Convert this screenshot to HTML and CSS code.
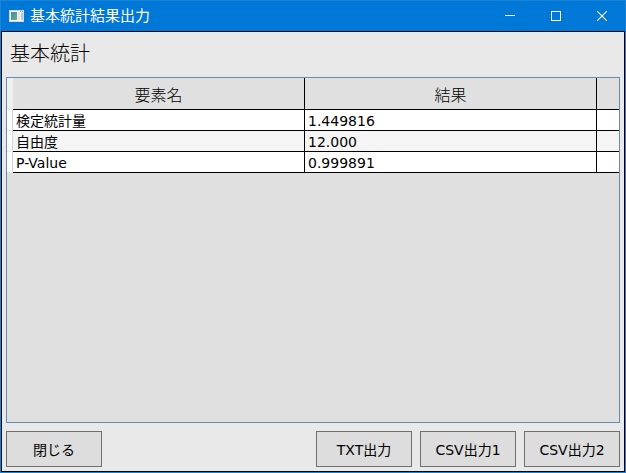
FILE: index.html
```html
<!DOCTYPE html>
<html lang="ja">
<head>
    <meta charset="UTF-8">
    <meta name="viewport" content="width=device-width, initial-scale=1.0">
    <title>基本統計結果出力</title>
    <link rel="stylesheet" href="styles.css">
</head>
<body>

    <div class="window">
        <header class="title-bar">
            <svg class="app-icon" width="15" height="12" viewBox="0 0 15 12" shape-rendering="crispEdges">
                <defs>
                    <linearGradient id="iconFill" x1="0" y1="0" x2="1" y2="1">
                        <stop offset="0" stop-color="#4b86b4"/>
                        <stop offset="1" stop-color="#5cb27c"/>
                    </linearGradient>
                </defs>
                <rect width="15" height="12" fill="#d3d8db"/>
                <rect x="1" y="1" width="13" height="10" fill="#f6f6f6"/>
                <rect x="2" y="2" width="6" height="8" fill="url(#iconFill)"/>
                <rect x="9" y="2" width="2" height="8" fill="#e4e4e4"/>
                <rect x="12" y="3" width="2" height="7" fill="#b4cfc2"/>
                <rect x="11" y="1" width="1" height="1" fill="#9aa6b0"/>
                <rect x="13" y="1" width="1" height="1" fill="#9aa6b0"/>
            </svg>
            <span class="title">基本統計結果出力</span>
            <div class="window-controls">
                <button type="button" aria-label="最小化">
                    <svg width="10" height="10" viewBox="0 0 10 10"><path d="M0 4.5H10" stroke="#fff"/></svg>
                </button>
                <button type="button" aria-label="最大化">
                    <svg width="10" height="10" viewBox="0 0 10 10"><rect x=".5" y=".5" width="9" height="9" fill="none" stroke="#fff"/></svg>
                </button>
                <button type="button" aria-label="ウィンドウを閉じる">
                    <svg width="10" height="10" viewBox="0 0 10 10"><path d="M0 0L10 10M10 0L0 10" stroke="#fff" stroke-width="1.1"/></svg>
                </button>
            </div>
        </header>

        <main class="content">
            <h1>基本統計</h1>

            <div class="grid">
                <table>
                    <colgroup>
                        <col class="col-marker">
                        <col>
                        <col>
                        <col class="col-rest">
                    </colgroup>
                    <thead>
                        <tr>
                            <td class="marker"></td>
                            <th scope="col">要素名</th>
                            <th scope="col">結果</th>
                            <td></td>
                        </tr>
                    </thead>
                    <tbody>
                        <tr>
                            <td class="marker"></td>
                            <td>検定統計量</td>
                            <td>1.449816</td>
                            <td></td>
                        </tr>
                        <tr>
                            <td class="marker"></td>
                            <td>自由度</td>
                            <td>12.000</td>
                            <td></td>
                        </tr>
                        <tr>
                            <td class="marker"></td>
                            <td>P-Value</td>
                            <td>0.999891</td>
                            <td></td>
                        </tr>
                    </tbody>
                </table>
            </div>

            <div class="actions">
                <button type="button" class="close">閉じる</button>
                <button type="button">TXT出力</button>
                <button type="button">CSV出力1</button>
                <button type="button">CSV出力2</button>
            </div>
        </main>
    </div>

</body>
</html>
```

FILE: styles.css
```css
* {
    box-sizing: border-box;
}

body {
    margin: 0;
    font-family: "DejaVu Sans", "Noto Sans CJK JP", sans-serif;
    font-size: 14px;
    color: #000;
}

.window {
    display: flex;
    flex-direction: column;
    min-height: 100vh;
    border: 1px solid #1883d7;
    background-color: #e9e9e9;
}

/* title bar */
.title-bar {
    display: flex;
    align-items: center;
    height: 30px;
    padding-left: 8px;
    background-color: #0078d7;
    color: #fff;
}

.title {
    margin-left: 6px;
    font-size: 15px;
    line-height: 20px;
}

.window-controls {
    display: flex;
    align-self: stretch;
    margin-left: auto;
}

.window-controls button {
    display: flex;
    justify-content: center;
    align-items: center;
    width: 46px;
    padding: 0;
    border: none;
    background: none;
}

.window-controls button:hover {
    background-color: #1a86db;
}

/* client area */
.content {
    display: flex;
    flex: 1;
    flex-direction: column;
    padding: 0 4px 4px;
    border: 1px solid #000;
}

h1 {
    margin: 0;
    padding: 9px 4px 9px;
    font-size: 20px;
    font-weight: 300;
    line-height: 27px;
}

.grid {
    flex: 1;
    border: 1px solid #688caf;
    background-color: #e0e0e0;
}

table {
    width: 100%;
    table-layout: fixed;
    border-collapse: separate;
    border-spacing: 0;
}

.col-marker {
    width: 6px;
}

.col-rest {
    width: 22px;
}

th,
td {
    height: 21px;
    padding: 2px 3px 0;
    border-right: 1px solid #000;
    border-bottom: 1px solid #000;
    line-height: 18px;
    text-align: left;
}

thead th,
thead td {
    height: 32px;
    padding-top: 4px;
    font-size: 16px;
    font-weight: 300;
    text-align: center;
}

th:last-child,
td:last-child {
    border-right: none;
}

tbody tr {
    background-color: #fff;
}

tbody tr:nth-child(even) {
    background-color: #f5f5f5;
}

.marker {
    padding: 0;
    border-right-color: #d5d5d5;
    border-bottom-color: #e6e6e6;
    background-color: #fff;
}

thead .marker {
    border-right-color: #f0f0f0;
    border-bottom-color: #f0f0f0;
    background-color: #f0f0f0;
}

/* buttons */
.actions {
    display: flex;
    justify-content: flex-end;
    gap: 8px;
    margin-top: 8px;
}

.actions button {
    width: 96px;
    height: 36px;
    padding: 0;
    border: 1px solid #707070;
    background-color: #ddd;
    font: inherit;
    color: inherit;
}

.actions button:hover {
    border-color: #3c7fb1;
    background-color: #bee6fd;
}

.actions .close {
    margin-right: auto;
}
```
